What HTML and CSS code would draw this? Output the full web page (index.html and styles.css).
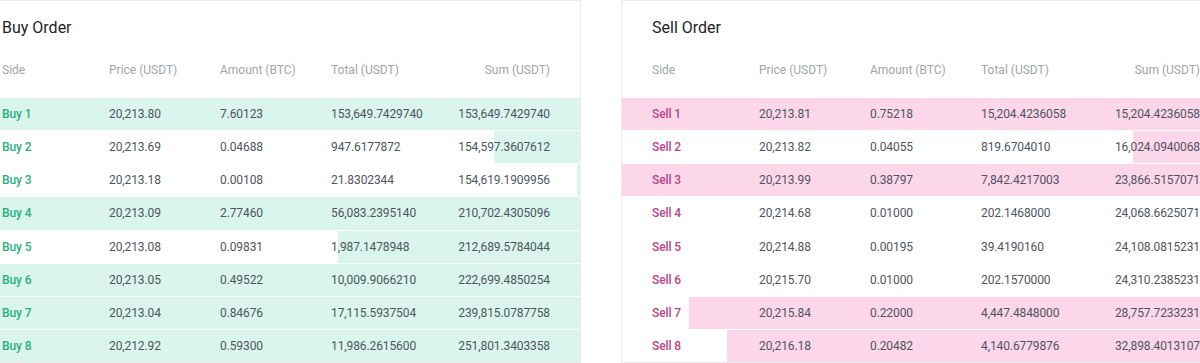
FILE: index.html
```html
<!DOCTYPE html>
<html lang="en">
<head>
<meta charset="utf-8">
<title>Order Book</title>
<link rel="stylesheet" href="styles.css">
</head>
<body>
<div class="books">
  <section class="panel">
    <h2 class="title">Buy Order</h2>
    <div class="row head"><span>Side</span><span>Price (USDT)</span><span>Amount (BTC)</span><span>Total (USDT)</span><span class="sum">Sum (USDT)</span></div>
    <div class="row buy" style="--d:100%"><span class="side">Buy 1</span><span>20,213.80</span><span>7.60123</span><span>153,649.7429740</span><span class="sum">153,649.7429740</span></div>
    <div class="row buy" style="--d:14.2%"><span class="side">Buy 2</span><span>20,213.69</span><span>0.04688</span><span>947.6177872</span><span class="sum">154,597.3607612</span></div>
    <div class="row buy" style="--d:0.5%"><span class="side">Buy 3</span><span>20,213.18</span><span>0.00108</span><span>21.8302344</span><span class="sum">154,619.1909956</span></div>
    <div class="row buy" style="--d:100%"><span class="side">Buy 4</span><span>20,213.09</span><span>2.77460</span><span>56,083.2395140</span><span class="sum">210,702.4305096</span></div>
    <div class="row buy" style="--d:39.8%"><span class="side">Buy 5</span><span>20,213.08</span><span>0.09831</span><span>1,987.1478948</span><span class="sum">212,689.5784044</span></div>
    <div class="row buy" style="--d:100%"><span class="side">Buy 6</span><span>20,213.05</span><span>0.49522</span><span>10,009.9066210</span><span class="sum">222,699.4850254</span></div>
    <div class="row buy" style="--d:100%"><span class="side">Buy 7</span><span>20,213.04</span><span>0.84676</span><span>17,115.5937504</span><span class="sum">239,815.0787758</span></div>
    <div class="row buy" style="--d:100%"><span class="side">Buy 8</span><span>20,212.92</span><span>0.59300</span><span>11,986.2615600</span><span class="sum">251,801.3403358</span></div>
  </section>
  <section class="panel">
    <h2 class="title">Sell Order</h2>
    <div class="row head"><span>Side</span><span>Price (USDT)</span><span>Amount (BTC)</span><span>Total (USDT)</span><span class="sum">Sum (USDT)</span></div>
    <div class="row sell" style="--d:100%"><span class="side">Sell 1</span><span>20,213.81</span><span>0.75218</span><span>15,204.4236058</span><span class="sum">15,204.4236058</span></div>
    <div class="row sell" style="--d:16%"><span class="side">Sell 2</span><span>20,213.82</span><span>0.04055</span><span>819.6704010</span><span class="sum">16,024.0940068</span></div>
    <div class="row sell" style="--d:100%"><span class="side">Sell 3</span><span>20,213.99</span><span>0.38797</span><span>7,842.4217003</span><span class="sum">23,866.5157071</span></div>
    <div class="row sell" style="--d:4%"><span class="side">Sell 4</span><span>20,214.68</span><span>0.01000</span><span>202.1468000</span><span class="sum">24,068.6625071</span></div>
    <div class="row sell" style="--d:1%"><span class="side">Sell 5</span><span>20,214.88</span><span>0.00195</span><span>39.4190160</span><span class="sum">24,108.0815231</span></div>
    <div class="row sell" style="--d:4%"><span class="side">Sell 6</span><span>20,215.70</span><span>0.01000</span><span>202.1570000</span><span class="sum">24,310.2385231</span></div>
    <div class="row sell" style="--d:89%"><span class="side">Sell 7</span><span>20,215.84</span><span>0.22000</span><span>4,447.4848000</span><span class="sum">28,757.7233231</span></div>
    <div class="row sell" style="--d:82.8%"><span class="side">Sell 8</span><span>20,216.18</span><span>0.20482</span><span>4,140.6779876</span><span class="sum">32,898.4013107</span></div>
  </section>
</div>
</body>
</html>
```

FILE: styles.css
```css
html, body {
  margin: 0;
  padding: 0;
  background: #ffffff;
  overflow: hidden;
}

body {
  font-family: Roboto, "Liberation Sans", sans-serif;
  color: #474d57;
}

.books {
  display: flex;
  gap: 40px;
  margin-left: -29px;
  width: 1300px;
}

.panel {
  box-sizing: border-box;
  width: 610px;
  flex: none;
  border: 1px solid #eaecef;
  padding: 15px 0 0 0;
  display: flex;
  flex-direction: column;
  gap: 1px;
  height: 363px;
}

.title {
  margin: 0;
  padding: 0 30px;
  font-size: 16px;
  line-height: 24px;
  font-weight: 400;
  color: #1e2329;
}

.row {
  display: grid;
  grid-template-columns: 107px 111px 111px 1fr auto;
  align-items: center;
  padding: 0 30px;
  height: 32.2px;
  font-size: 12px;
  letter-spacing: -0.1px;
  color: #4f555e;
}

.row.head {
  height: auto;
  padding-top: 21px;
  padding-bottom: 19px;
  line-height: 16px;
  color: #a0a5ab;
  letter-spacing: 0;
}

.sum {
  text-align: right;
}

.buy {
  background: linear-gradient(to left, #d9f5ec var(--d), transparent var(--d));
}

.sell {
  background: linear-gradient(to left, #fcd7ea var(--d), transparent var(--d));
}

.buy .side {
  color: #2aae7f;
  font-weight: 500;
}

.sell .side {
  color: #b9458a;
  font-weight: 500;
}
```
